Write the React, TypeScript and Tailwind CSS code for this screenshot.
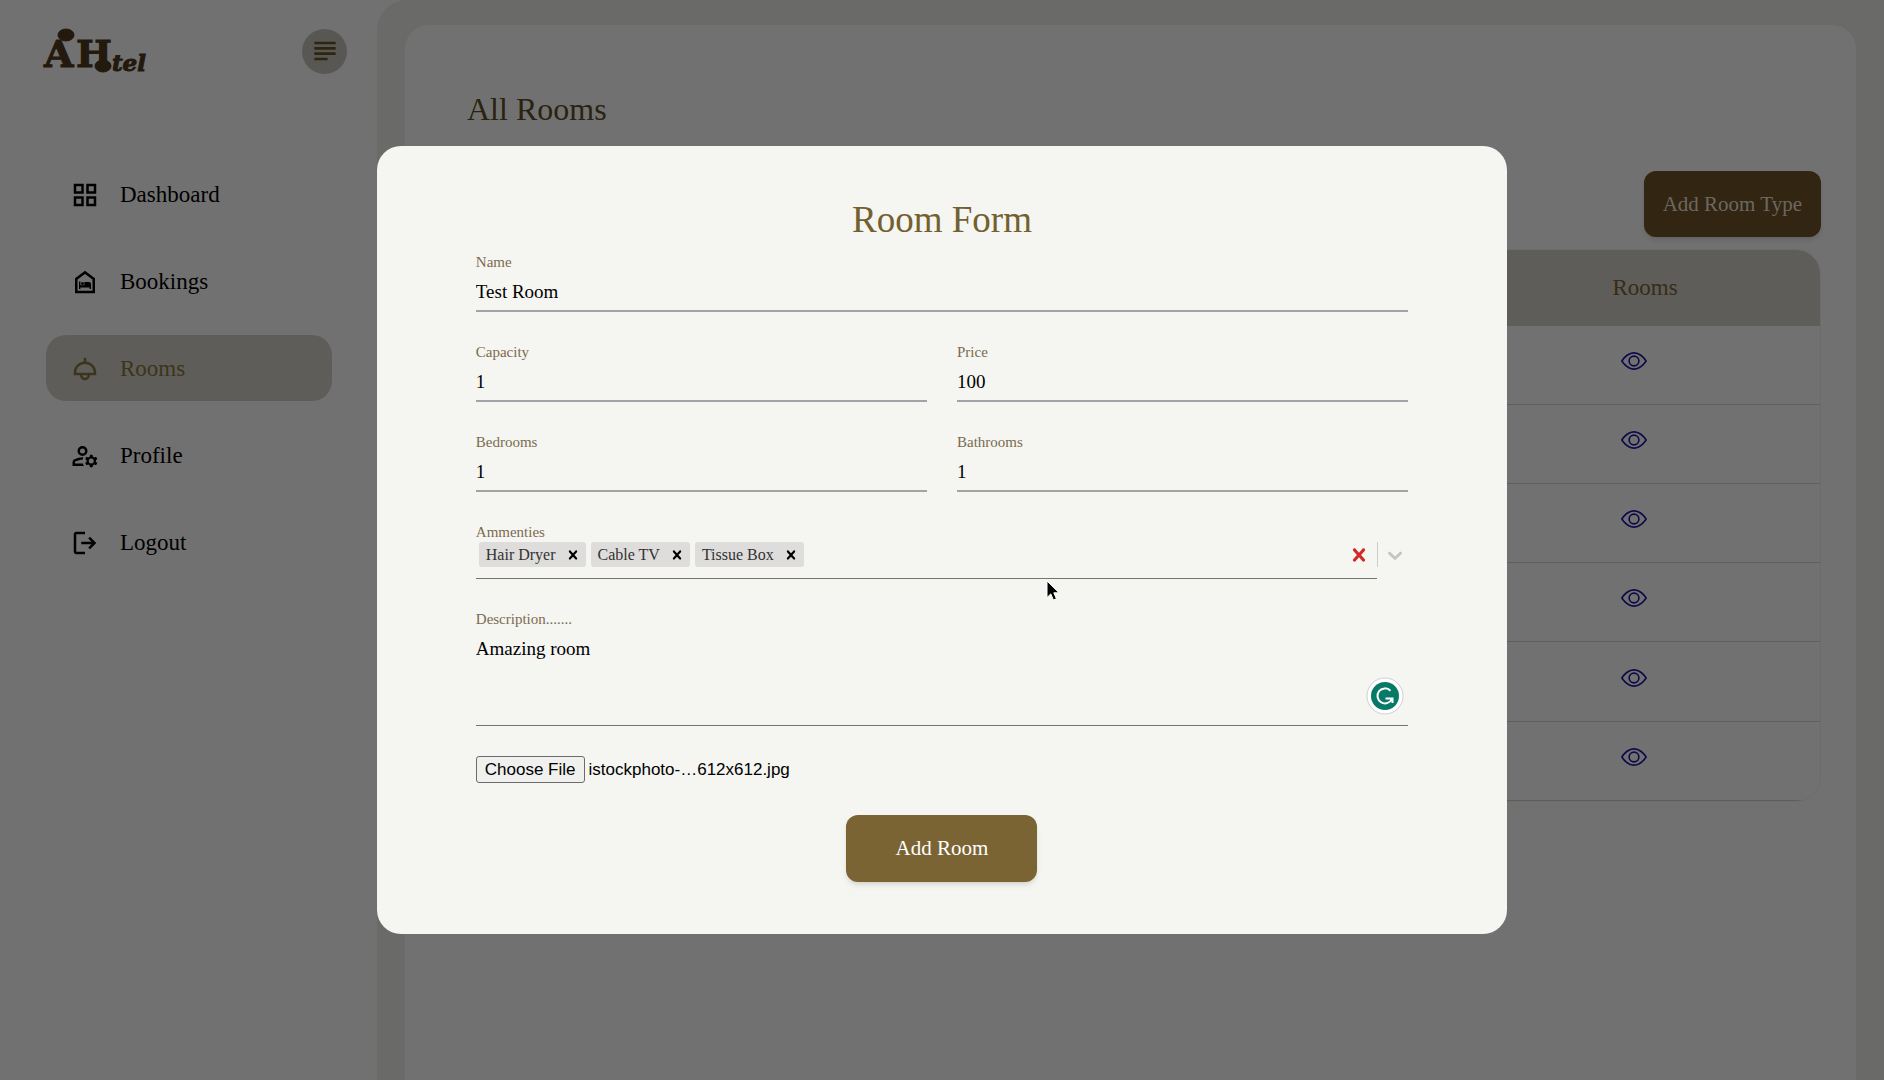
import React, { useState } from "react";
import { BsEye } from "react-icons/bs";

const CROSS =
  "M14.348 14.849c-0.469 0.469-1.229 0.469-1.697 0l-2.651-3.030-2.651 3.029c-0.469 0.469-1.229 0.469-1.697 0-0.469-0.469-0.469-1.229 0-1.697l2.758-3.15-2.759-3.152c-0.469-0.469-0.469-1.228 0-1.697s1.228-0.469 1.697 0l2.652 3.031 2.651-3.031c0.469-0.469 1.228-0.469 1.697 0s0.469 1.229 0 1.697l-2.758 3.152 2.758 3.15c0.469 0.469 0.469 1.229 0 1.698z";
const CHEVRON =
  "M4.516 7.548c0.436-0.446 1.043-0.481 1.576 0l3.908 3.747 3.908-3.747c0.533-0.481 1.141-0.446 1.574 0 0.436 0.445 0.408 1.197 0 1.615-0.406 0.418-4.695 4.502-4.695 4.502-0.217 0.223-0.502 0.335-0.787 0.335s-0.57-0.112-0.789-0.335c0 0-4.287-4.084-4.695-4.502s-0.436-1.17 0-1.615z";

const NAV = [
  {
    label: "Dashboard",
    d: "M3 11V3h8v8Zm0 10v-8h8v8Zm10-10V3h8v8Zm0 10v-8h8v8ZM5 9h4V5H5Zm10 0h4V5h-4Zm0 10h4v-4h-4ZM5 19h4v-4H5Z",
  },
  {
    label: "Bookings",
    d: "M12 3 4 9v12h16V9l-8-6zm6 16H6v-9l6-4.500 6 4.500v9zM7.200 11.500h1.100v3h3.200v-2.600h3.600c1 0 1.700.700 1.700 1.700v4h-1.100v-1.300H8.300v1.300H7.200zM10 11.900a1.200 1.200 0 1 1 0 2.400 1.200 1.200 0 0 1 0-2.400z",
  },
  {
    label: "Rooms",
    d: "M11 6.060V3h2v3.060c4.500.500 8 4.310 8 8.940v2h-5c0 2.210-1.790 4-4 4s-4-1.790-4-4H3v-2c0-4.630 3.500-8.440 8-8.940zM12 8c-3.860 0-7 3.140-7 7h14c0-3.860-3.140-7-7-7zm0 11c1.100 0 2-.900 2-2h-4c0 1.100.900 2 2 2z",
    active: true,
  },
  {
    label: "Profile",
    d: "M10 12a4 4 0 1 1 0-8 4 4 0 0 1 0 8zm0-2a2 2 0 1 0 0-4 2 2 0 0 0 0 4zM2 20v-2.800c0-.570.150-1.090.430-1.570.280-.480.670-.860 1.170-1.130A15 15 0 0 1 10 13h.700c-.300.660-.480 1.330-.550 2H10c-1.790 0-3.600.420-5.500 1.250-.300.170-.500.520-.500.950v.800h6.300c.180.720.460 1.390.850 2H2zm14 1-.300-1.500a5 5 0 0 1-1.100-.625l-1.450.450-1-1.700 1.150-1a4 4 0 0 1 0-1.250l-1.150-1 1-1.700 1.450.450c.350-.260.700-.470 1.100-.625L16 11h2l.300 1.500c.400.150.750.370 1.100.650l1.450-.500 1 1.750-1.150 1a4 4 0 0 1 0 1.225l1.150 1-1 1.700-1.450-.450a5 5 0 0 1-1.100.625L18 21h-2zm1-3a2 2 0 1 0 0-4 2 2 0 0 0 0 4z",
  },
  {
    label: "Logout",
    d: "M5 21q-.825 0-1.412-.587Q3 19.825 3 19V5q0-.825.588-1.413Q4.175 3 5 3h7v2H5v14h7v2Zm11-4-1.375-1.450 2.550-2.550H9v-2h8.175l-2.550-2.550L16 7l5 5Z",
  },
];

function Logo() {
  return (
    <svg width="124" height="62" viewBox="0 -6 124 62" role="img" aria-label="AHotel" className="overflow-visible text-[#46331a]">
      <g fill="currentColor" stroke="currentColor" fontFamily="DejaVu Serif" fontWeight="700">
        <ellipse cx="24" cy="9" rx="8" ry="6" />
        <text x="2" y="41" fontSize="38">A</text>
        <text x="34" y="41" fontSize="38">H</text>
        <ellipse cx="61" cy="40" rx="8" ry="6" />
        <text x="70" y="45" fontSize="23" fontStyle="italic">tel</text>
      </g>
    </svg>
  );
}

function Sidebar() {
  return (
    <aside className="w-[377px] shrink-0">
      <div className="flex items-center justify-between pt-5 pr-[30px] pl-[42px]">
        <Logo />
        <button type="button" aria-label="Toggle menu" className="flex size-[45px] items-center justify-center rounded-full bg-[#b3afa9] text-[#5d4a22]">
          <svg width="32" height="32" viewBox="0 0 24 24" fill="currentColor">
            <path d="M14 17H4v2h10v-2zm6-8H4v2h16V9zM4 15h16v-2H4v2zM4 5v2h16V5H4z" />
          </svg>
        </button>
      </div>
      <nav className="mt-[79px] flex flex-col gap-[21px] pr-[45px] pl-[46px]">
        {NAV.map((item) => (
          <a
            key={item.label}
            href="#"
            className={
              "flex h-[66px] items-center gap-5 rounded-[20px] px-6 pt-0.5 text-[23px] " +
              (item.active ? "bg-[#bfbbb2] text-[#78693a]" : "text-black")
            }
          >
            <svg width="30" height="30" viewBox="0 0 24 24" fill="currentColor" fillRule="evenodd">
              <path d={item.d} />
            </svg>
            {item.label}
          </a>
        ))}
      </nav>
    </aside>
  );
}

function Field({ id, label, initial }: { id: string; label: string; initial: string }) {
  const [value, setValue] = useState(initial);
  return (
    <div className="flex min-w-0 flex-1 flex-col">
      <label htmlFor={id} className="text-[15px] leading-5 text-[#7b6b4e]">{label}</label>
      <input
        id={id}
        value={value}
        onChange={(e) => setValue(e.target.value)}
        className="h-10 w-full border-b-2 border-[#a4a2a6] bg-transparent pt-0.5 text-[19px] text-black outline-none"
      />
    </div>
  );
}

function Cross({ size }: { size: number }) {
  return (
    <svg width={size} height={size} viewBox="0 0 20 20" fill="currentColor">
      <path d={CROSS} />
    </svg>
  );
}

function RoomForm() {
  const [chips, setChips] = useState(["Hair Dryer", "Cable TV", "Tissue Box"]);
  return (
    <form
      role="dialog"
      aria-label="Room Form"
      onSubmit={(e) => e.preventDefault()}
      className="flex w-3/5 flex-col rounded-3xl bg-[#f5f5f2] px-[99px] pt-[50px] pb-[52px]"
    >
      <h2 className="mb-2 text-center text-[37px] leading-[48px] text-[#73602f]">Room Form</h2>
      <div className="flex flex-col gap-[30px]">
        <Field id="name" label="Name" initial="Test Room" />
        <div className="flex gap-[30px]">
          <Field id="capacity" label="Capacity" initial="1" />
          <Field id="price" label="Price" initial="100" />
        </div>
        <div className="flex gap-[30px]">
          <Field id="bedrooms" label="Bedrooms" initial="1" />
          <Field id="bathrooms" label="Bathrooms" initial="1" />
        </div>
        <div>
          <label htmlFor="amenities" className="block text-[15px] leading-5 text-[#7b6b4e]">Ammenties</label>
          <div className="flex h-[37px] items-start">
            <div className="flex h-full min-w-0 flex-1 items-start gap-[5px] border-b border-[#77746a] pl-[3px]">
              {chips.map((chip) => (
                <span key={chip} className="flex h-[25px] items-center gap-2 rounded-[3px] bg-[#dedddc] pr-1 pl-[7px] text-base leading-none text-[#333]">
                  {chip}
                  <button type="button" aria-label={"Remove " + chip} onClick={() => setChips(chips.filter((c) => c !== chip))} className="text-black">
                    <Cross size={18} />
                  </button>
                </span>
              ))}
              <input id="amenities" className="h-[25px] min-w-0 flex-1 bg-transparent text-base outline-none" />
              <button type="button" aria-label="Clear all" onClick={() => setChips([])} className="mr-[5px] flex h-[25px] items-center text-[#cf2a27]">
                <Cross size={26} />
              </button>
            </div>
            <span className="h-[25px] w-px bg-[#cccccc]" />
            <button type="button" aria-label="Open list" className="flex h-[25px] items-center pr-px pl-[5px] text-[#c4c4c0]">
              <svg width="24" height="24" viewBox="0 0 20 20" fill="currentColor">
                <path d={CHEVRON} />
              </svg>
            </button>
          </div>
        </div>
        <div className="relative flex flex-col">
          <label htmlFor="description" className="text-[15px] leading-5 text-[#7b6b4e]">Description.......</label>
          <textarea
            id="description"
            defaultValue="Amazing room"
            className="h-[97px] w-full resize-none border-b border-[#77746f] bg-transparent pt-2 text-[19px] leading-6 text-black outline-none"
          />
          <svg className="absolute right-1 bottom-[11px]" width="38" height="38" viewBox="0 0 38 38" aria-hidden="true">
            <circle cx="19" cy="19" r="18" fill="#fff" stroke="#d0d0d0" />
            <circle cx="19" cy="19" r="14" fill="#067a66" />
            <path d="M24.500 13.800A7.500 7.500 0 1 0 26 21.500M19.500 21.500H26.500V26" fill="none" stroke="#fff" strokeWidth="2" />
          </svg>
        </div>
        <label className="flex cursor-pointer items-center self-start font-['Liberation_Sans',sans-serif] text-[17px] text-black">
          <input type="file" className="sr-only" />
          <span className="flex h-[27px] items-center rounded-[3px] border border-[#6b6b6b] bg-[#f0f0ee] px-2">Choose File</span>
          <span className="ml-1">istockphoto-…612x612.jpg</span>
        </label>
      </div>
      <button type="submit" className="mt-8 h-[67px] w-[191px] self-center rounded-xl bg-[#7b6434] text-[21px] text-white shadow-md">
        Add Room
      </button>
    </form>
  );
}

export default function App() {
  return (
    <div className="relative flex min-h-screen bg-[#e3e3e3] font-['Liberation_Serif',serif]">
      <Sidebar />
      <div className="flex min-w-0 flex-1 bg-[#e3e3e3]">
        <main className="flex min-w-0 flex-1 rounded-tl-[30px] bg-[#d4d4d0] pt-[25px] pr-7 pl-7">
          <section className="flex min-w-0 flex-1 flex-col rounded-t-3xl bg-[#e3e3e3] px-[35px]">
            <h1 className="mt-[60px] ml-[27px] text-[32px] leading-[48px] text-[#544620]">All Rooms</h1>
            <button type="button" className="mt-[38px] h-[66px] self-end rounded-xl bg-[#644a22] px-[19px] pt-0.5 text-[21px] text-[#d8cfc0] shadow-md">
              Add Room Type
            </button>
            <div className="mt-3 overflow-hidden rounded-[25px] border border-[#d8d8d2]">
              <table className="h-[551px] w-full border-collapse">
                <thead>
                  <tr className="h-[76px] bg-[#bfbbb2] text-[23px] text-[#6b5a30]">
                    <th scope="col" aria-label="Type" />
                    <th scope="col" className="w-[350px] font-normal">Rooms</th>
                  </tr>
                </thead>
                <tbody>
                  {[1, 2, 3, 4, 5, 6].map((n) => (
                    <tr key={n} className="border-b border-[#bcbcba]">
                      <td />
                      <td>
                        <a href="#" aria-label="View rooms" className="mr-[22px] mb-2 flex justify-center text-[#1a1290]">
                          <BsEye size={26} />
                        </a>
                      </td>
                    </tr>
                  ))}
                </tbody>
              </table>
            </div>
          </section>
        </main>
      </div>
      <div className="fixed inset-0 flex items-center justify-center bg-black/50">
        <RoomForm />
        <svg className="pointer-events-none absolute top-[580px] left-[1046px]" width="16" height="22" viewBox="0 0 16 22" aria-hidden="true">
          <path d="M1 1v16.500l3.800-3.600 2.600 6.100 3-1.300-2.600-5.900h5.200z" fill="#000" stroke="#fff" strokeWidth="1" />
        </svg>
      </div>
    </div>
  );
}
